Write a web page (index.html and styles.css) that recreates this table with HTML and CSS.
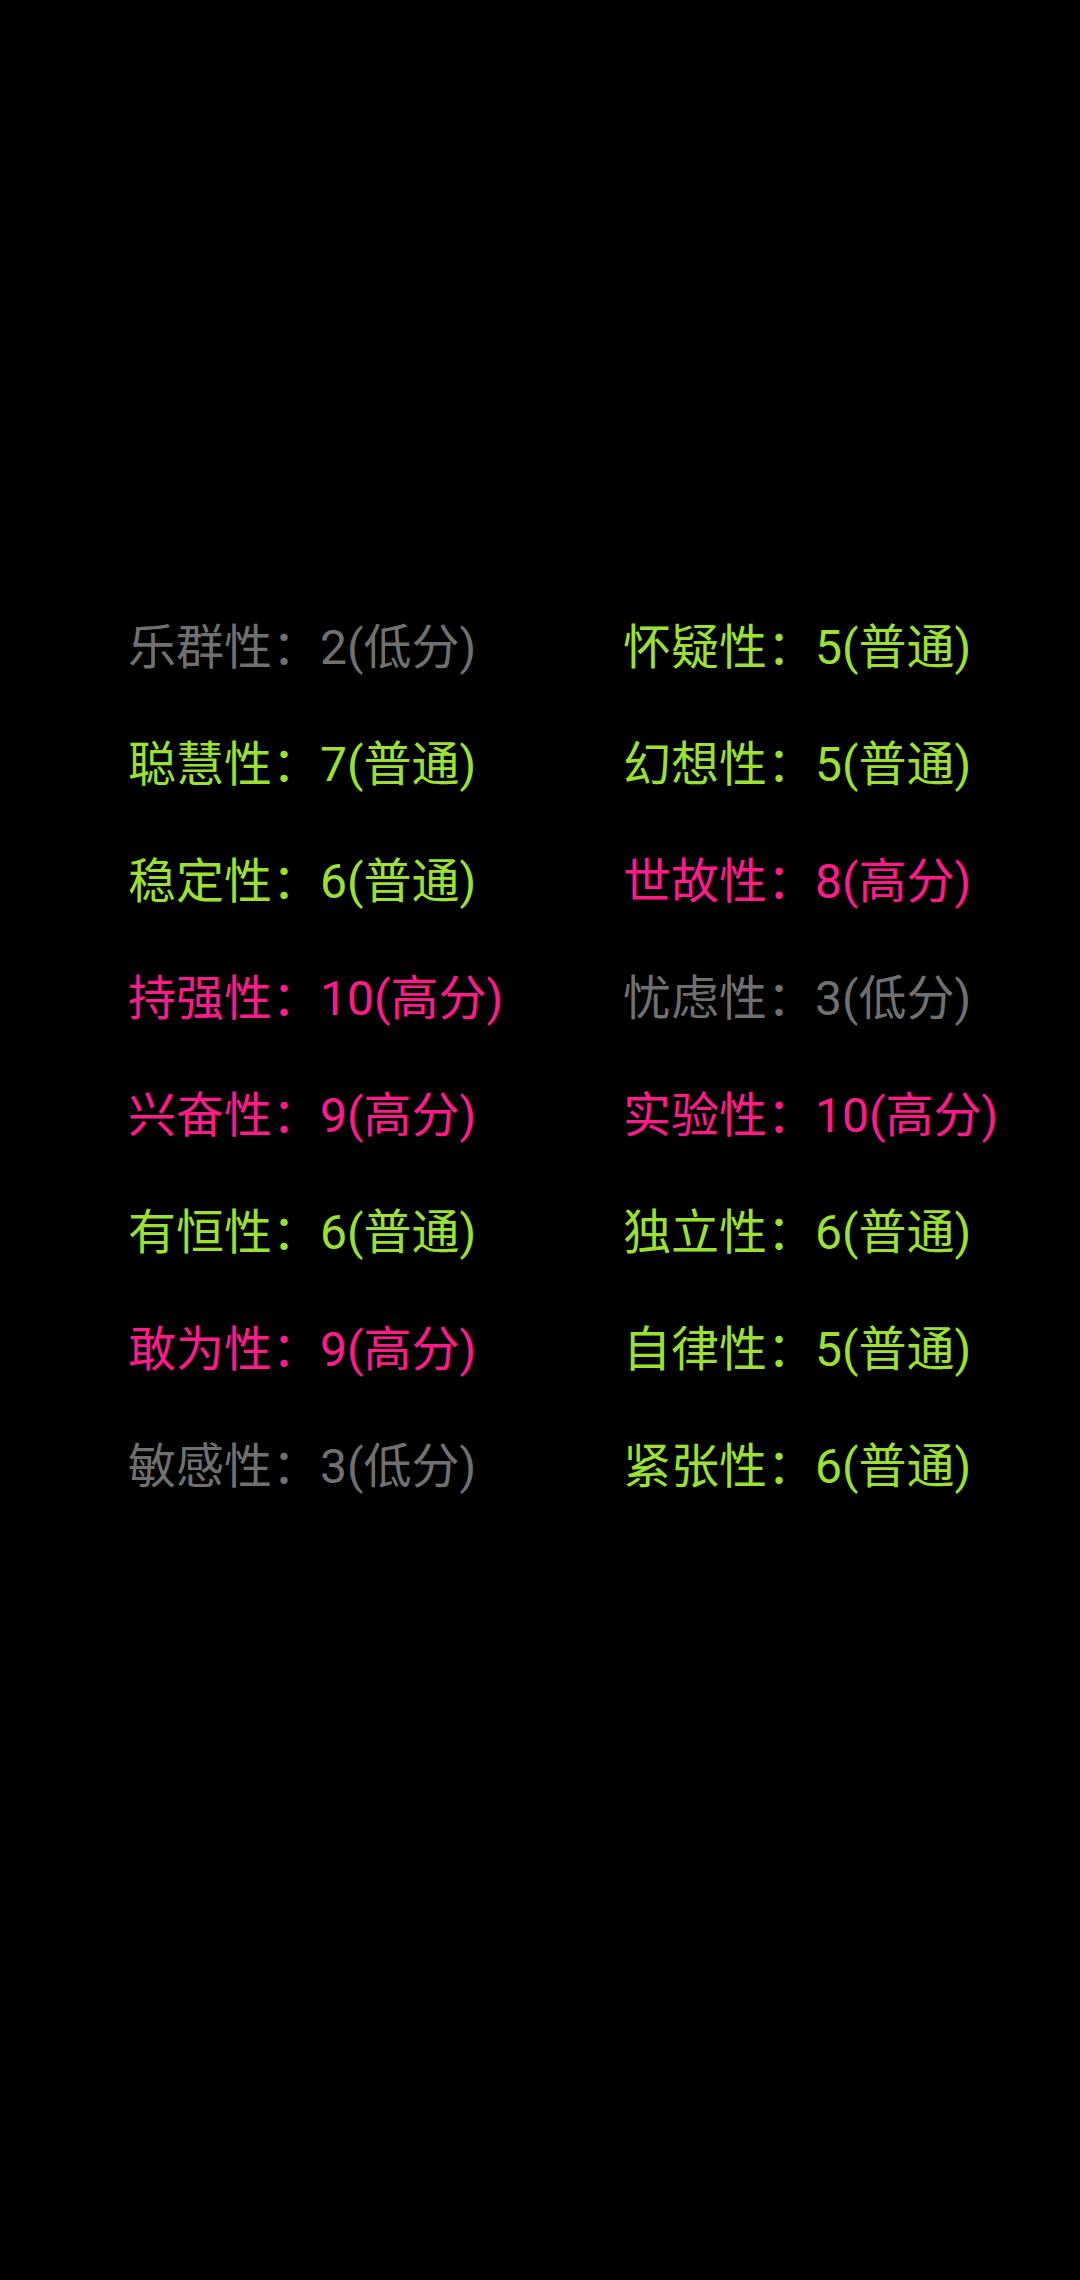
FILE: index.html
```html
<!DOCTYPE html>
<html lang="zh-CN">
<head>
<meta charset="utf-8">
<link rel="stylesheet" href="styles.css">
</head>
<body>
<div class="page">
  <div class="grid">
    <div class="item low">乐群性：2(低分)</div>
    <div class="item mid">怀疑性：5(普通)</div>
    <div class="item mid">聪慧性：7(普通)</div>
    <div class="item mid">幻想性：5(普通)</div>
    <div class="item mid">稳定性：6(普通)</div>
    <div class="item high">世故性：8(高分)</div>
    <div class="item high">持强性：10(高分)</div>
    <div class="item low">忧虑性：3(低分)</div>
    <div class="item high">兴奋性：9(高分)</div>
    <div class="item high">实验性：10(高分)</div>
    <div class="item mid">有恒性：6(普通)</div>
    <div class="item mid">独立性：6(普通)</div>
    <div class="item high">敢为性：9(高分)</div>
    <div class="item mid">自律性：5(普通)</div>
    <div class="item low">敏感性：3(低分)</div>
    <div class="item mid">紧张性：6(普通)</div>
  </div>
</div>
</body>
</html>
```
FILE: styles.css
```css
html, body {
  margin: 0;
  padding: 0;
  background: #000;
}
.page {
  width: 1080px;
  height: 2280px;
  background: #000;
  padding-top: 589px;
  padding-left: 128px;
  box-sizing: border-box;
}
.grid {
  display: grid;
  grid-template-columns: 495px 400px;
  grid-auto-rows: 117px;
}
.item {
  font-family: Roboto, "Noto Sans CJK SC", sans-serif;
  font-size: 48px;
  line-height: 117px;
  white-space: nowrap;
}
.low { color: #707070; }
.mid { color: #9be22f; }
.high { color: #ff1a8c; }
```
